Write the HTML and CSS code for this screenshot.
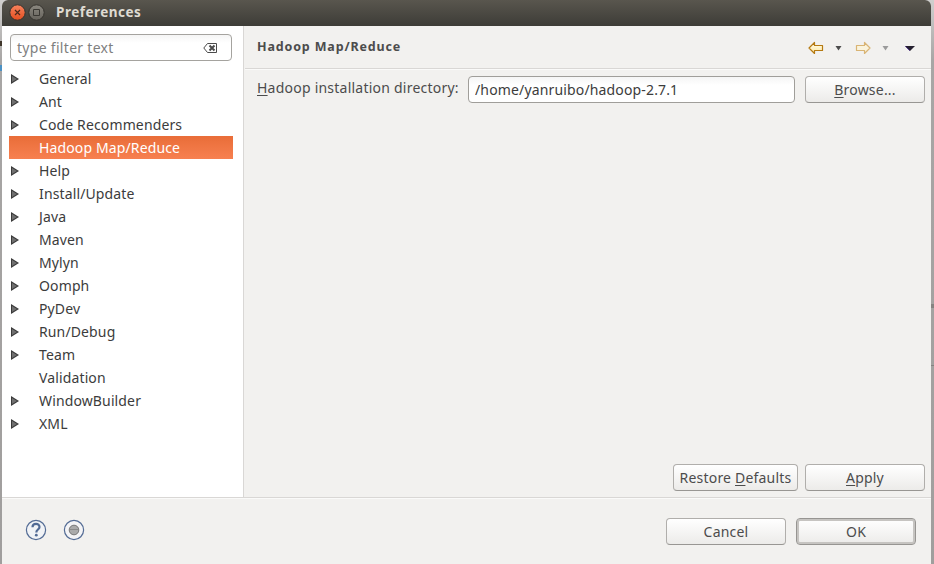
FILE: index.html
```html
<!DOCTYPE html>
<html lang="en">
<head>
<meta charset="utf-8">
<title>Preferences</title>
<link rel="stylesheet" href="styles.css">
</head>
<body>
<div class="window">
  <header class="titlebar">
    <svg class="winbtn" width="17" height="17" viewBox="0 0 17 17"><defs><linearGradient id="red" x2="0" y2="1"><stop stop-color="#f7835e"/><stop offset="1" stop-color="#e34e1f"/></linearGradient></defs><circle cx="8.500" cy="8.500" r="7.700" fill="url(#red)" stroke="#35332e"/><path d="M6 6l5 5m0-5l-5 5" stroke="#4b2a1c" stroke-width="1.200"/></svg>
    <svg class="winbtn" width="17" height="17" viewBox="0 0 17 17"><defs><linearGradient id="gray" x2="0" y2="1"><stop stop-color="#8b8880"/><stop offset="1" stop-color="#66635c"/></linearGradient></defs><circle cx="8.500" cy="8.500" r="7.700" fill="url(#gray)" stroke="#35332e"/><path d="M5.500 5.500h6v6h-6z" fill="none" stroke="#3a3833"/></svg>
    <h1 class="title">Preferences</h1>
  </header>
  <div class="main">
    <aside class="sidebar">
      <div class="filter"><span>type filter text</span>
        <svg width="15" height="10" viewBox="0 0 15 10"><path d="M4.500.5h9v9h-9L.8 5z" fill="none" stroke="#4b4b4b"/><path d="M6.500 2.500l5 5m0-5l-5 5" stroke="#4b4b4b" stroke-width="2"/></svg>
      </div>
      <ul class="tree">
        <li class="branch">General</li>
        <li class="branch">Ant</li>
        <li class="branch">Code Recommenders</li>
        <li class="selected">Hadoop Map/Reduce</li>
        <li class="branch">Help</li>
        <li class="branch">Install/Update</li>
        <li class="branch">Java</li>
        <li class="branch">Maven</li>
        <li class="branch">Mylyn</li>
        <li class="branch">Oomph</li>
        <li class="branch">PyDev</li>
        <li class="branch">Run/Debug</li>
        <li class="branch">Team</li>
        <li>Validation</li>
        <li class="branch">WindowBuilder</li>
        <li class="branch">XML</li>
      </ul>
    </aside>
    <section class="page">
      <div class="page-head">
        <h2>Hadoop Map/Reduce</h2>
        <svg class="nav" width="108" height="14" viewBox="0 0 108 14">
          <defs><linearGradient id="gold" x2="0" y2="1"><stop stop-color="#fffdf0"/><stop offset="1" stop-color="#ffe89b"/></linearGradient></defs>
          <path d="M1 7l5.500-5.500v3H14.500v5h-8v3z" fill="url(#gold)" stroke="#b57a12" stroke-width="1.200" stroke-linejoin="round"/>
          <path d="M27.500 5h6l-3 4.500z" fill="#4c4c4c"/>
          <path d="M62 7l-5.500-5.500v3H48.500v5h8v3z" fill="#faf3dc" stroke="#d9b474" stroke-width="1.200" stroke-linejoin="round"/>
          <path d="M74.500 5h6l-3 4.500z" fill="#9b9b9b"/>
          <path d="M97 5h10l-5 5z" fill="#25202f"/><path d="M97.300 5.300l4.500 4.500" stroke="#45278a" stroke-width=".8"/>
        </svg>
      </div>
      <div class="field">
        <label class="dirlabel" for="dir"><u>H</u>adoop installation directory:</label>
        <input id="dir" class="dir" type="text" value="/home/yanruibo/hadoop-2.7.1">
        <button class="btn"><span><u>B</u>rowse...</span></button>
      </div>
      <div class="page-actions">
        <button class="btn restore"><span>Restore <u>D</u>efaults</span></button>
        <button class="btn"><span><u>A</u>pply</span></button>
      </div>
    </section>
  </div>
  <footer class="footer">
    <svg class="round" width="22" height="22" viewBox="0 0 22 22"><circle cx="11" cy="11" r="9.600" fill="#f1f3f6" stroke="#546c95" stroke-width="1.200"/><path d="M7.500 8.300C7.500 3.800 14.500 3.900 14.500 8C14.500 10.500 11.300 10.600 11.300 13.500" fill="none" stroke="#526b95" stroke-width="2.200"/><circle cx="11.300" cy="16.200" r="1.400" fill="#526b95"/></svg>
    <svg class="round" width="22" height="22" viewBox="0 0 22 22"><circle cx="11" cy="11" r="9.600" fill="#f4f4f6" stroke="#546c95" stroke-width="1.200"/><circle cx="11" cy="11" r="4.800" fill="#aaa" stroke="#777"/><path d="M7 10.500h8" stroke="#8a8a8a"/></svg>
    <div class="footer-actions">
      <button class="btn"><span>Cancel</span></button>
      <button class="btn default"><span>OK</span></button>
    </div>
  </footer>
</div>
</body>
</html>
```
FILE: styles.css
```css
* { box-sizing: border-box; }
body {
  margin: 0;
  height: 564px;
  padding: 0 3px 0 2px;
  background:
    linear-gradient(#40372b, #40372b) 0 41px / 2px 5px no-repeat,
    linear-gradient(#4c91c4, #4c91c4) 0 65px / 2px 6px no-repeat,
    linear-gradient(#858381, #858381) 100% 304px / 3px 4px no-repeat,
    linear-gradient(#858381, #858381) 100% 365px / 3px 1px no-repeat,
    linear-gradient(#d0cfce, #a8a6a5 60px, #a09e9d);
  font: 14px/23px "Noto Sans", sans-serif;
  color: #3c3c3c;
  overflow: hidden;
}
.window {
  height: 564px;
  display: flex;
  flex-direction: column;
  background: #f2f1ef;
  border-radius: 6px 6px 0 0;
  overflow: hidden;
}
.titlebar {
  height: 26px;
  flex: none;
  display: flex;
  align-items: center;
  padding: 0 0 1px 7px;
  background: linear-gradient(#59564e, #3d3c37);
}
.winbtn { margin-right: 2px; }
.title {
  margin: 0 0 0 9px;
  font-size: 13.500px;
  line-height: 25px;
  font-weight: 700;
  letter-spacing: .5px;
  color: #dfdbd2;
}
.main { height: 471px; display: flex; flex: none; }
.sidebar {
  width: 242px;
  flex: none;
  padding: 8px 10px 0 7px;
  background: #fff;
  border-right: 1px solid #d9d7d5;
}
.filter {
  width: 222px;
  height: 27px;
  margin-left: 1px;
  padding: 0 13px 0 6px;
  display: flex;
  align-items: center;
  justify-content: space-between;
  border: 1px solid #a5a39f;
  border-radius: 4px;
  background: linear-gradient(#f5f5f5, #fff 8px);
  letter-spacing: .3px;
  color: #7f7f7f;
}
.tree { list-style: none; margin: 6px 0 0; padding: 0; width: 224px; letter-spacing: .13px; }
.tree li { height: 23px; padding-left: 30px; position: relative; }
.branch::before,
.branch::after {
  content: "";
  position: absolute;
  left: 2px;
  top: 7px;
  width: 8px;
  height: 10px;
  background: #3a3a3a;
  clip-path: polygon(0 0, 100% 50%, 0 100%);
}
.branch::after {
  left: 3px;
  top: 9px;
  width: 5px;
  height: 6px;
  background: #707070;
}
.tree .selected { color: #fff; background: linear-gradient(#e96d38, #f78050); }
.page {
  flex: 1;
  display: flex;
  flex-direction: column;
  margin-left: 1px;
}
.page-head {
  height: 43px;
  flex: none;
  display: flex;
  align-items: center;
  justify-content: space-between;
  padding: 0 15px 2px 12px;
  border-bottom: 1px solid #d9d7d5;
  box-shadow: 0 1px #fafaf9;
}
h2 { margin: 0; font-size: 12.500px; letter-spacing: .85px; color: #4c4c4c; }
.nav { margin-top: 4px; }
.field { display: flex; padding: 7px 6px 0 12px; }
.dirlabel { width: 211px; white-space: nowrap; letter-spacing: .23px; color: #4c4c4c; }
.dir {
  width: 327px;
  height: 27px;
  margin-right: 10px;
  padding: 0 6px;
  border: 1px solid #a09e9a;
  border-radius: 4px;
  background: linear-gradient(#f5f5f5, #fff 8px);
  font: inherit;
  letter-spacing: .15px;
  color: #3c3c3c;
}
.btn {
  width: 120px;
  height: 27px;
  padding: 0;
  border: 1px solid #b0aeab;
  border-bottom-color: #989693;
  border-radius: 4px;
  background: linear-gradient(#fff, #ecebe9);
  font: inherit;
  line-height: 23px;
  letter-spacing: .2px;
  color: #4c4c4c;
  white-space: nowrap;
}
u { text-underline-offset: 2px; text-decoration-thickness: 1px; }
.page-actions {
  margin-top: auto;
  display: flex;
  justify-content: flex-end;
  gap: 7px;
  padding: 0 6px 6px 0;
}
.restore { width: 125px; }
.footer {
  height: 67px;
  display: flex;
  align-items: center;
  gap: 16px;
  padding: 0 15px 2px 23px;
  border-top: 1px solid #d9d7d5;
  box-shadow: inset 0 1px #fafaf9;
}
.round { flex: none; }
.footer-actions { display: flex; gap: 10px; margin-left: auto; margin-top: 3px; }
.default { border-color: #979592; box-shadow: inset 0 0 0 2px #c6c4c1; }
```
